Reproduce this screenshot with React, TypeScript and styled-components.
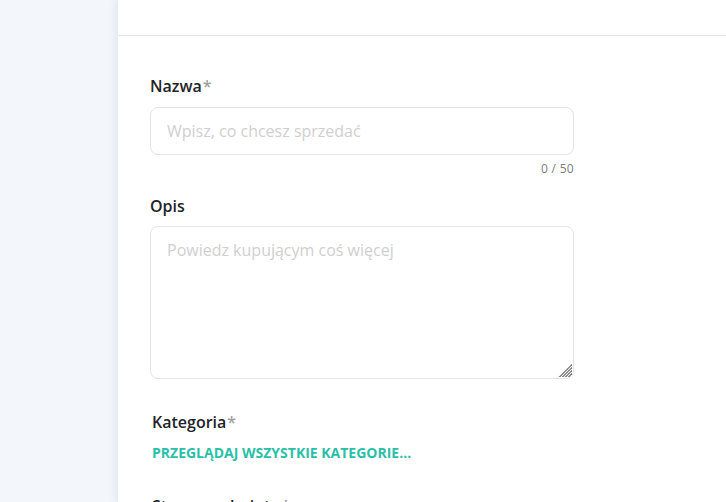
import React from "react";
import styled, { createGlobalStyle } from "styled-components";

const Global = createGlobalStyle`
  html, body { margin: 0; padding: 0; height: 100%; }
  body { font-family: "Open Sans", "Noto Sans", sans-serif; background: #f3f6fb; overflow: hidden; }
  #root { height: 100%; }
`;

const Page = styled.div`
  display: flex;
  height: 502px;
  width: 726px;
`;

const Sidebar = styled.aside`
  width: 118px;
  flex: none;
  background: #f3f6fb;
`;

const Main = styled.main`
  flex: 1;
  background: #ffffff;
  box-shadow: -3px 0 8px rgba(40, 60, 90, 0.08);
  position: relative;
  display: flex;
  flex-direction: column;
`;

const Header = styled.header`
  height: 35px;
  border-bottom: 1px solid #e6e6e6;
  flex: none;
`;

const Form = styled.form`
  padding: 40px 0 0 32px;
  width: 424px;
  display: flex;
  flex-direction: column;
`;

const Field = styled.div<{ $indent?: number; $gap?: number; $top?: number }>`
  display: flex;
  flex-direction: column;
  padding-left: ${(p) => p.$indent ?? 0}px;
  margin-top: ${(p) => p.$top ?? 0}px;
  margin-bottom: ${(p) => p.$gap ?? 0}px;
`;

const Label = styled.label<{ $mb?: number }>`
  font-size: 16px;
  font-weight: 600;
  color: #222428;
  line-height: 20px;
  margin-bottom: ${(p) => p.$mb ?? 11}px;
`;

const Star = styled.span`
  color: #a0a0a0;
  font-weight: 600;
  margin-left: 1px;
`;

const Input = styled.input`
  box-sizing: border-box;
  width: 424px;
  height: 48px;
  border: 1px solid #e4e4e4;
  border-radius: 8px;
  padding: 0 16px;
  font-family: inherit;
  font-size: 16px;
  color: #222;
  outline: none;
  &::placeholder { color: #cfcfcf; }
`;

const Counter = styled.div`
  text-align: right;
  font-size: 12px;
  color: #777c84;
  line-height: 16px;
  margin-top: 6px;
  letter-spacing: 0.3px;
`;

const AreaWrap = styled.div`
  position: relative;
  width: 424px;
  height: 153px;
`;

const TextArea = styled.textarea`
  display: block;
  box-sizing: border-box;
  width: 424px;
  height: 153px;
  border: 1px solid #e4e4e4;
  border-radius: 8px;
  padding: 12px 16px;
  font-family: inherit;
  font-size: 16px;
  line-height: 22px;
  color: #222;
  outline: none;
  resize: vertical;
  &::placeholder { color: #cfcfcf; }
  &::-webkit-resizer { background: transparent; }
`;

const Grip = styled.svg`
  position: absolute;
  right: 2px;
  bottom: 2px;
  width: 14px;
  height: 14px;
  pointer-events: none;
`;

const Link = styled.a`
  font-size: 14px;
  font-weight: 700;
  color: #2bbfa8;
  text-decoration: none;
  line-height: 16px;
  margin-top: 2px;
  cursor: pointer;
`;

export default function App() {
  return (
    <>
      <Global />
      <Page>
        <Sidebar />
        <Main>
          <Header />
          <Form>
            <Field>
              <Label>
                Nazwa<Star>*</Star>
              </Label>
              <Input placeholder="Wpisz, co chcesz sprzedać" />
              <Counter>0 / 50</Counter>
            </Field>
            <Field $top={19} $gap={33}>
              <Label $mb={10}>Opis</Label>
              <AreaWrap>
                <TextArea placeholder="Powiedz kupującym coś więcej" />
                <Grip viewBox="0 0 14 14" aria-hidden="true">
                  {[4, 7, 10, 13].map((d) => (
                    <line
                      key={d}
                      x1={14.5}
                      y1={14 - d}
                      x2={14 - d}
                      y2={14.5}
                      stroke="#6e6e6e"
                      strokeWidth={1.2}
                    />
                  ))}
                </Grip>
              </AreaWrap>
            </Field>
            <Field $indent={2} $gap={35}>
              <Label>
                Kategoria<Star>*</Star>
              </Label>
              <Link>PRZEGLĄDAJ WSZYSTKIE KATEGORIE...</Link>
            </Field>
            <Field $indent={2}>
              <Label>
                Stan przedmiotu<Star>*</Star>
              </Label>
            </Field>
          </Form>
        </Main>
      </Page>
    </>
  );
}
